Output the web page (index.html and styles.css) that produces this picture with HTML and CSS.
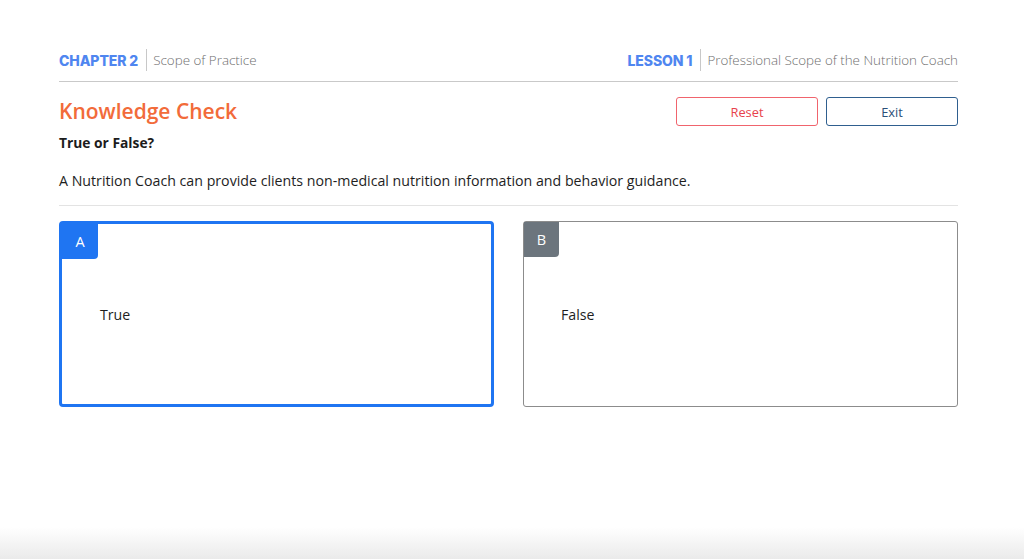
FILE: index.html
```html
<!DOCTYPE html>
<html>
<head>
<meta charset="utf-8">
<link rel="stylesheet" href="styles.css">
</head>
<body>
<div class="page">
  <header class="crumbs">
    <div class="crumb"><span class="crumb-key">CHAPTER 2</span><span class="crumb-sep"></span><span class="crumb-val">Scope of Practice</span></div>
    <div class="crumb"><span class="crumb-key">LESSON 1</span><span class="crumb-sep"></span><span class="crumb-val">Professional Scope of the Nutrition Coach</span></div>
  </header>
  <section class="head">
    <div class="head-text">
      <h1 class="title">Knowledge Check</h1>
      <div class="subtitle">True or False?</div>
    </div>
    <div class="actions">
      <button class="btn btn-reset">Reset</button>
      <button class="btn btn-exit">Exit</button>
    </div>
  </section>
  <p class="question">A Nutrition Coach can provide clients non-medical nutrition information and behavior guidance.</p>
  <div class="options">
    <div class="option selected">
      <span class="badge">A</span>
      <span class="option-text">True</span>
    </div>
    <div class="option">
      <span class="badge">B</span>
      <span class="option-text">False</span>
    </div>
  </div>
</div>
<div class="bottom-shade"></div>
</body>
</html>
```

FILE: styles.css
```css
html, body {
  margin: 0;
  padding: 0;
  background: #ffffff;
  height: 100%;
  overflow: hidden;
}
body {
  font-family: "Open Sans", "Noto Sans", sans-serif;
  color: #212529;
  position: relative;
}
.page {
  width: 899px;
  margin: 0 auto 0 59px;
  padding-top: 49px;
}
.crumbs {
  display: flex;
  justify-content: space-between;
  align-items: center;
  height: 22px;
  padding-bottom: 10px;
  border-bottom: 1px solid #c9c9c9;
}
.crumb {
  display: flex;
  align-items: center;
}
.crumb-key {
  font-family: "Inter", sans-serif;
  font-weight: 800;
  font-size: 14px;
  color: #4f86f0;
  letter-spacing: -0.1px;
}
.crumb-sep {
  width: 1px;
  height: 22px;
  background: #c8c8c8;
  margin: 0 6px 0 8px;
}
.crumb-val {
  font-family: "Open Sans", sans-serif;
  font-weight: 300;
  font-size: 13.4px;
  color: #6f6f6f;
}
.head {
  display: flex;
  justify-content: space-between;
  align-items: flex-start;
  padding-top: 14px;
}
.title {
  margin: 0;
  font-family: "Open Sans", sans-serif;
  font-weight: 600;
  font-size: 21px;
  line-height: 30px;
  color: #f26b3a;
}
.subtitle {
  font-weight: 700;
  font-size: 13.8px;
  line-height: 20px;
  margin-top: 7px;
  color: #1c1c1c;
}
.actions {
  display: flex;
  gap: 8px;
  padding-top: 1px;
}
.btn {
  height: 29px;
  background: #fff;
  border-radius: 3px;
  font-family: "Open Sans", sans-serif;
  font-size: 12.8px;
  cursor: pointer;
}
.btn-reset {
  width: 142px;
  border: 1px solid #f0646d;
  color: #e8424c;
}
.btn-exit {
  width: 132px;
  border: 1px solid #2f5f8f;
  color: #2b4f78;
}
.question {
  margin: 18px 0 0;
  font-size: 14.2px;
  line-height: 20px;
  color: #1e1e1e;
  padding-bottom: 14px;
  border-bottom: 1px solid #e3e3e3;
}
.options {
  display: grid;
  grid-template-columns: 435px 435px;
  justify-content: space-between;
  margin-top: 15px;
}
.option {
  position: relative;
  height: 186px;
  box-sizing: border-box;
  border: 1px solid #8c8c8c;
  border-radius: 3px;
  display: flex;
  align-items: center;
  padding-left: 37px;
}
.option.selected {
  border: 3px solid #1f75f2;
  border-radius: 4px;
  padding-left: 38px;
}
.badge {
  position: absolute;
  top: 0;
  left: 0;
  width: 35px;
  height: 35px;
  display: flex;
  align-items: center;
  justify-content: center;
  background: #6c757d;
  color: #fff;
  font-size: 14.5px;
  border-radius: 0 0 4px 0;
}
.option.selected .badge {
  background: #1f75f2;
  width: 36px;
}
.option-text {
  font-size: 14.2px;
  color: #1e1e1e;
  margin-top: 1px;
}
.bottom-shade {
  position: absolute;
  left: 0;
  right: 0;
  bottom: 0;
  height: 32px;
  background: linear-gradient(to bottom, rgba(235,235,235,0), rgba(232,232,232,0.9));
}
```
